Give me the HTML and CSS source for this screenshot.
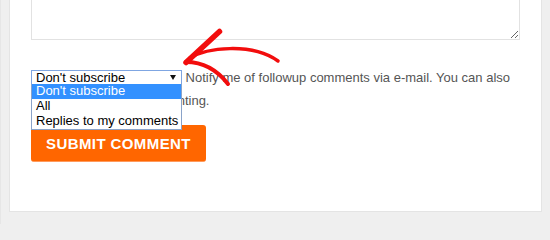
FILE: index.html
```html
<!DOCTYPE html>
<html lang="en">
<head>
<meta charset="utf-8">
<title>Comment subscription</title>
<link rel="stylesheet" href="styles.css">
</head>
<body>
<div class="page">
  <div class="panel">
    <textarea class="comment" aria-label="Comment"></textarea>
    <div class="subscribe">
      <span class="select-wrap">
        <span class="select"><span class="select-value">Don't subscribe</span><span class="caret"></span></span>
        <span class="options">
          <span class="option is-active">Don't subscribe</span>
          <span class="option">All</span>
          <span class="option">Replies to my comments</span>
        </span>
      </span>
      Notify me of followup comments via e-mail. You can also subscribe without commenting.
    </div>
    <button class="submit" type="button">SUBMIT COMMENT</button>
  </div>
  <svg class="arrow" width="110" height="70" viewBox="175 25 110 70" aria-hidden="true">
    <path d="M218.5,31.5 L185,62.5" class="stroke stroke-thick"/>
    <path d="M185,62 Q210,62 227,84" class="stroke stroke-mid"/>
    <path d="M189,58 C205,48 250,42 277,61" class="stroke stroke-thin"/>
  </svg>
</div>
</body>
</html>
```
FILE: styles.css
```css
* {
  box-sizing: border-box;
}

html, body {
  margin: 0;
  padding: 0;
}

html {
  background: #efefef;
}

body {
  width: 550px;
  height: 224px;
  overflow: hidden;
  background: #efefef;
  font-family: "Liberation Sans", Arial, sans-serif;
}

.page {
  position: relative;
  height: 224px;
  border-left: 1px solid #e6e6e6;
  padding-left: 8px;
}

.panel {
  width: 533px;
  height: 212px;
  background: #ffffff;
  border: 1px solid #e4e4e4;
  border-top: none;
  padding: 0 21px 0 21px;
  overflow: hidden;
}

.comment {
  display: block;
  width: 489px;
  height: 50px;
  margin: -10px 0 0 0;
  border: 1px solid #e2e2e2;
  background: #ffffff;
  resize: both;
  outline: none;
}

.subscribe {
  margin: 26px 0 0 0;
  width: 489px;
  font-size: 13px;
  line-height: 23px;
  color: #555555;
}

.select-wrap {
  position: relative;
  display: inline-block;
  vertical-align: top;
  margin-top: 4px;
  width: 151px;
  height: 15px;
}

.select {
  display: flex;
  align-items: center;
  justify-content: space-between;
  width: 151px;
  height: 15px;
  padding: 0 5px 0 4px;
  border: 1px solid #7fa6e2;
  background: #ffffff;
  color: #000000;
  font-family: Arial, "Liberation Sans", sans-serif;
  font-size: 13px;
  line-height: 13px;
}

.caret {
  width: 0;
  height: 0;
  border-left: 3.5px solid transparent;
  border-right: 3.5px solid transparent;
  border-top: 5px solid #111111;
}

.options {
  position: absolute;
  top: 14px;
  left: 0;
  display: block;
  width: 151px;
  border: 1px solid #8aa3c9;
  border-top: none;
  background: #ffffff;
  z-index: 2;
}

.option {
  display: block;
  height: 15px;
  padding: 0 4px;
  font-family: Arial, "Liberation Sans", sans-serif;
  font-size: 13px;
  line-height: 14px;
  color: #000000;
  white-space: nowrap;
}

.option.is-active {
  background: #3391ff;
  color: #ffffff;
}

.submit {
  display: block;
  width: 175px;
  height: 37px;
  margin: 13px 0 0 0;
  padding: 0;
  border: none;
  border-bottom: 1px solid #ff9a5c;
  border-radius: 3px;
  background: #ff6600;
  color: #ffffff;
  font-family: "Liberation Sans", Arial, sans-serif;
  font-weight: bold;
  font-size: 15px;
  letter-spacing: 0.4px;
  cursor: pointer;
}

.arrow {
  position: absolute;
  left: 175px;
  top: 25px;
  z-index: 3;
  overflow: visible;
}

.stroke {
  fill: none;
  stroke: #f20d0d;
  stroke-linecap: round;
  stroke-linejoin: round;
}

.stroke-thick {
  stroke-width: 5.5;
}

.stroke-mid {
  stroke-width: 4;
}

.stroke-thin {
  stroke-width: 3.5;
}
```
